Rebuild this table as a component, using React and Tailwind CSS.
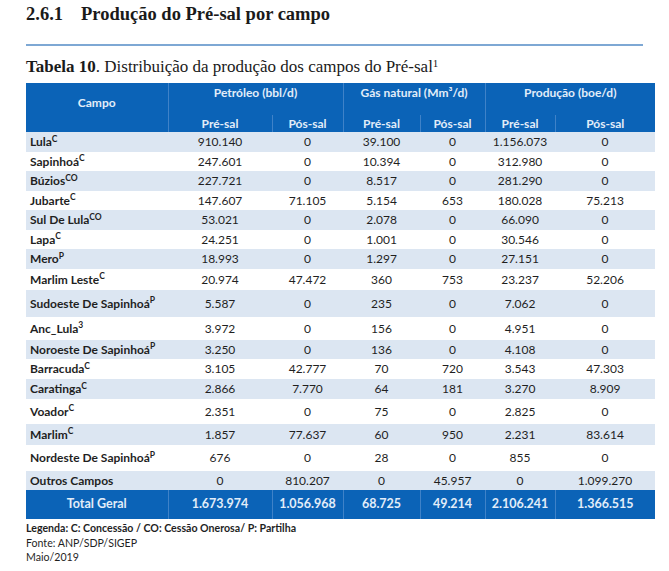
const rows = [
  ["Lula", "C", "910.140", "0", "39.100", "0", "1.156.073", "0", 20],
  ["Sapinhoá", "C", "247.601", "0", "10.394", "0", "312.980", "0", 19],
  ["Búzios", "CO", "227.721", "0", "8.517", "0", "281.290", "0", 20],
  ["Jubarte", "C", "147.607", "71.105", "5.154", "653", "180.028", "75.213", 19],
  ["Sul De Lula", "CO", "53.021", "0", "2.078", "0", "66.090", "0", 20],
  ["Lapa", "C", "24.251", "0", "1.001", "0", "30.546", "0", 19],
  ["Mero", "P", "18.993", "0", "1.297", "0", "27.151", "0", 20],
  ["Marlim Leste", "C", "20.974", "47.472", "360", "753", "23.237", "52.206", 21],
  ["Sudoeste De Sapinhoá", "P", "5.587", "0", "235", "0", "7.062", "0", 27],
  ["Anc_Lula", "3", "3.972", "0", "156", "0", "4.951", "0", 23],
  ["Noroeste De Sapinhoá", "P", "3.250", "0", "136", "0", "4.108", "0", 19],
  ["Barracuda", "C", "3.105", "42.777", "70", "720", "3.543", "47.303", 20],
  ["Caratinga", "C", "2.866", "7.770", "64", "181", "3.270", "8.909", 20],
  ["Voador", "C", "2.351", "0", "75", "0", "2.825", "0", 25],
  ["Marlim", "C", "1.857", "77.637", "60", "950", "2.231", "83.614", 21],
  ["Nordeste De Sapinhoá", "P", "676", "0", "28", "0", "855", "0", 26],
  ["Outros Campos", "", "0", "810.207", "0", "45.957", "0", "1.099.270", 19],
]

const totals = ["1.673.974", "1.056.968", "68.725", "49.214", "2.106.241", "1.366.515"]

export default function App() {
  return (
    <div className="w-[669px] h-[571px] bg-white overflow-hidden pl-[26px] pt-[3px]">
      {/* Section title */}
      <h2 className="font-['Liberation_Serif',serif] font-bold text-[18.5px] leading-[22px] text-[#1a1a1a]">
        2.6.1<span className="inline-block w-[18px]" />Produção do Pré-sal por campo
      </h2>
      <div className="mt-[19px] w-[617px] h-[2px] bg-[#7ea8d4]" />

      <p className="mt-[12px] font-['Liberation_Serif',serif] text-[17px] leading-[18px] text-[#1a1a1a]">
        <span className="font-bold">Tabela 10</span>. Distribuição da produção dos campos do Pré-sal<sup className="text-[11px]">1</sup>
      </p>

      <table className="mt-[7px] table-fixed border-collapse w-[629px] font-['Lato',sans-serif] text-[12px] text-[#1f1f1f]">
        <colgroup>
          <col className="w-[142px]" />
          <col className="w-[104px]" />
          <col className="w-[71px]" />
          <col className="w-[77px]" />
          <col className="w-[65px]" />
          <col className="w-[70px]" />
          <col className="w-[100px]" />
        </colgroup>
        <thead className="bg-[#0b63b7] text-[#e2edf9] font-bold">
          <tr className="h-[32px]">
            <th rowSpan={2} className="align-middle pb-[10px] border-r border-[#3f82c8]">Campo</th>
            <th colSpan={2} className="align-top pt-[1px] border-r border-[#3f82c8]">Petróleo (bbl/d)</th>
            <th colSpan={2} className="align-top pt-[1px] border-r border-[#3f82c8]">Gás natural (Mm³/d)</th>
            <th colSpan={2} className="align-top pt-[1px]">Produção (boe/d)</th>
          </tr>
          <tr className="h-[17px] leading-[17px]">
            <th className="border-r border-[#3f82c8]">Pré-sal</th>
            <th className="border-r border-[#3f82c8]">Pós-sal</th>
            <th className="border-r border-[#3f82c8]">Pré-sal</th>
            <th className="border-r border-[#3f82c8]">Pós-sal</th>
            <th className="border-r border-[#3f82c8]">Pré-sal</th>
            <th>Pós-sal</th>
          </tr>
        </thead>
        <tbody>
          {rows.map((r, i) => (
            <tr key={r[0]} className={i % 2 === 0 ? "bg-[#dce6f2]" : "bg-white"} style={{ height: r[8] }}>
              <td className="pl-[4px] font-bold text-left whitespace-nowrap">
                {r[0]}
                {r[1] && <sup className="text-[8.5px]">{r[1]}</sup>}
              </td>
              {r.slice(2, 8).map((v, j) => (
                <td key={j} className="text-center">{v}</td>
              ))}
            </tr>
          ))}
          <tr className="h-[29px] bg-[#0b63b7] text-[#e2edf9] font-bold text-[12.5px]">
            <td className="text-center border-r border-[#3f82c8]">Total Geral</td>
            {totals.map((v, j) => (
              <td key={j} className={"text-center " + (j < 5 ? "border-r border-[#3f82c8]" : "")}>{v}</td>
            ))}
          </tr>
        </tbody>
      </table>

      <div className="mt-[2px] font-['Lato',sans-serif] text-[10.6px] leading-[14.5px] text-[#1f1f1f]">
        <p className="font-bold">Legenda: C: Concessão / CO: Cessão Onerosa/ P: Partilha</p>
        <p>Fonte: ANP/SDP/SIGEP</p>
        <p>Maio/2019</p>
      </div>
    </div>
  )
}
